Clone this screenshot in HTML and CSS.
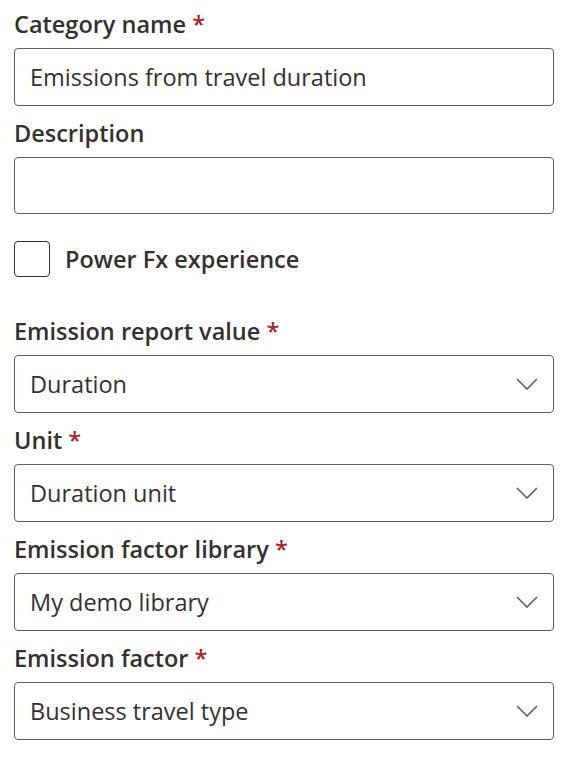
FILE: index.html
```html
<!DOCTYPE html>
<html lang="en">
<head>
<meta charset="utf-8">
<title>Category form</title>
<link rel="stylesheet" href="styles.css">
</head>
<body>
<form class="form">
  <div class="field">
    <label class="label label-first">Category name <span class="req">*</span></label>
    <div class="box"><span class="value">Emissions from travel duration</span></div>
  </div>
  <div class="field">
    <label class="label">Description</label>
    <div class="box box-short"></div>
  </div>
  <div class="check-row">
    <span class="checkbox"></span>
    <span class="check-label">Power Fx experience</span>
  </div>
  <div class="field">
    <label class="label">Emission report value <span class="req">*</span></label>
    <div class="box dropdown"><span class="value">Duration</span>
      <svg class="chev" width="22" height="12" viewBox="0 0 22 12"><path d="M1 1 L11 11 L21 1" fill="none" stroke="#605e5c" stroke-width="1.6"/></svg>
    </div>
  </div>
  <div class="field">
    <label class="label">Unit <span class="req">*</span></label>
    <div class="box dropdown"><span class="value">Duration unit</span>
      <svg class="chev" width="22" height="12" viewBox="0 0 22 12"><path d="M1 1 L11 11 L21 1" fill="none" stroke="#605e5c" stroke-width="1.6"/></svg>
    </div>
  </div>
  <div class="field">
    <label class="label">Emission factor library <span class="req">*</span></label>
    <div class="box dropdown"><span class="value">My demo library</span>
      <svg class="chev" width="22" height="12" viewBox="0 0 22 12"><path d="M1 1 L11 11 L21 1" fill="none" stroke="#605e5c" stroke-width="1.6"/></svg>
    </div>
  </div>
  <div class="field">
    <label class="label">Emission factor <span class="req">*</span></label>
    <div class="box dropdown"><span class="value">Business travel type</span>
      <svg class="chev" width="22" height="12" viewBox="0 0 22 12"><path d="M1 1 L11 11 L21 1" fill="none" stroke="#605e5c" stroke-width="1.6"/></svg>
    </div>
  </div>
</form>
</body>
</html>
```

FILE: styles.css
```css
html, body {
  margin: 0;
  padding: 0;
  background: #ffffff;
}
body {
  font-family: "Open Sans", "Noto Sans", "Liberation Sans", sans-serif;
  color: #323130;
}
.form {
  width: 540px;
  padding: 0 10px 0 14px;
  display: flex;
  flex-direction: column;
}
.field {
  display: flex;
  flex-direction: column;
}
.label {
  display: block;
  font-size: 23.5px;
  font-weight: 600;
  line-height: 32px;
  padding: 11px 0 8px;
}
.label-first {
  padding-top: 8px;
}
.req {
  color: #a4262c;
}
.box {
  box-sizing: border-box;
  height: 58px;
  border: 1.6px solid #605e5c;
  border-radius: 4px;
  display: flex;
  align-items: center;
  padding: 0 15px;
}
.box-short {
  height: 57px;
}
.value {
  font-size: 23.5px;
  line-height: 32px;
  flex: 1;
}
.chev {
  flex: none;
}
.check-row {
  display: flex;
  align-items: center;
  gap: 15px;
  margin: 27px 0;
  height: 36px;
}
.checkbox {
  box-sizing: border-box;
  width: 36px;
  height: 36px;
  border: 1.6px solid #323130;
  border-radius: 4px;
}
.check-label {
  font-size: 23.5px;
  font-weight: 600;
  line-height: 32px;
}
```
